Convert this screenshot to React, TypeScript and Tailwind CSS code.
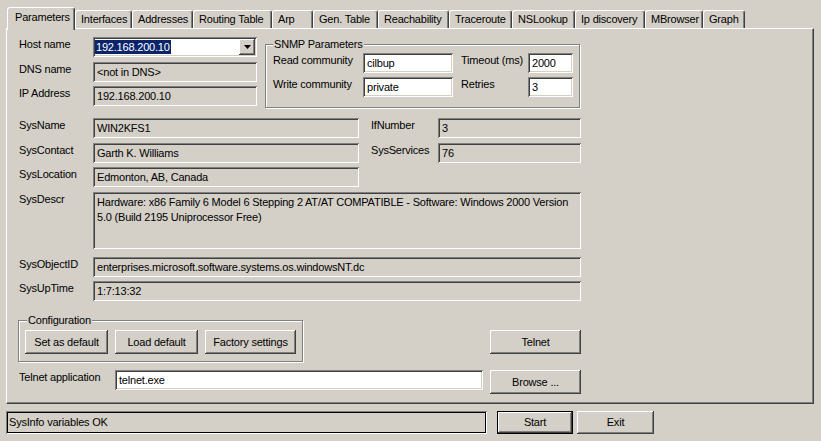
import type { ReactNode } from "react";

// win2000 style bevels
const sunken =
  "shadow-[inset_1px_1px_#808080,inset_-1px_-1px_#ffffff,inset_2px_2px_#404040,inset_-2px_-2px_#d4d0c8]";
const raised =
  "shadow-[inset_-1px_-1px_#404040,inset_1px_1px_#ffffff,inset_-2px_-2px_#808080,inset_2px_2px_#d4d0c8]";
const etched = "border border-[#808080] shadow-[inset_1px_1px_#ffffff,1px_1px_#ffffff]";

interface BoxProps {
  className?: string;
  white?: boolean;
  children?: ReactNode;
}

const Field = ({ className = "", white, children }: BoxProps) => (
  <div
    className={`${sunken} ${
      white ? "bg-white" : "bg-[#d4d0c8]"
    } h-[20px] flex items-center pl-[4px] leading-[13px] whitespace-nowrap overflow-hidden ${className}`}
  >
    {children}
  </div>
);

const Label = ({ className = "", children }: BoxProps) => (
  <div className={`pt-[1px] leading-[13px] whitespace-nowrap ${className}`}>{children}</div>
);

const Button = ({ className = "", children }: BoxProps) => (
  <div className={`${raised} bg-[#d4d0c8] flex items-center justify-center leading-[13px] ${className}`}>
    {children}
  </div>
);

const tabs = [
  { name: "Interfaces", w: "w-[57px]" },
  { name: "Addresses", w: "w-[61px]" },
  { name: "Routing Table", w: "w-[79px]" },
  { name: "Arp", w: "w-[41px]" },
  { name: "Gen. Table", w: "w-[65px]" },
  { name: "Reachability", w: "w-[71px]" },
  { name: "Traceroute", w: "w-[63px]" },
  { name: "NSLookup", w: "w-[63px]" },
  { name: "Ip discovery", w: "w-[70px]" },
  { name: "MBrowser", w: "w-[58px]" },
  { name: "Graph", w: "w-[42px]" },
];

const App = () => {
  return (
    <div className="w-[821px] h-[441px] bg-[#d4d0c8] text-black text-[11px] tracking-[-0.2px] font-['Liberation_Sans',Arial,sans-serif] overflow-hidden">
      {/* tab strip */}
      <div className="h-[28px] flex items-end pl-[7px]">
        <div className="relative z-10 w-[68px] h-[23px] -mb-[2px] bg-[#d4d0c8] border-l border-t border-white border-r border-r-[#404040] shadow-[inset_-1px_0_#808080] rounded-t-[3px] pl-[7px] pt-[3px] leading-[13px]">
          Parameters
        </div>
        {tabs.map((tab) => (
          <div
            key={tab.name}
            className={`${tab.w} h-[18px] border-l border-t border-white border-r border-r-[#404040] shadow-[inset_-1px_0_#808080] rounded-t-[3px] pl-[5px] pt-[2px] leading-[13px] whitespace-nowrap overflow-hidden`}
          >
            {tab.name}
          </div>
        ))}
      </div>

      {/* page */}
      <div className="ml-[6px] w-[808px] h-[376px] border border-white border-r-[#404040] border-b-[#404040] shadow-[inset_-1px_-1px_#808080] pl-[12px] pt-[8px] flex flex-col">
        <div className="flex items-start">
          <div className="w-[238px] flex flex-col">
            <div className="flex items-start">
              <Label className="w-[74px]">Host name</Label>
              <Field white className="w-[164px] !pl-[2px] pr-[2px]">
                <span className="bg-[#0a246a] text-white px-[1px] h-[14px] leading-[14px]">192.168.200.10</span>
                <Button className="ml-auto w-[16px] h-[16px]">
                  <svg width="7" height="4" viewBox="0 0 7 4">
                    <polygon points="0,0 7,0 3.5,4" fill="#000" />
                  </svg>
                </Button>
              </Field>
            </div>
            <div className="flex items-start mt-[5px]">
              <Label className="w-[74px]">DNS name</Label>
              <Field className="w-[164px]">&lt;not in DNS&gt;</Field>
            </div>
            <div className="flex items-start mt-[4px]">
              <Label className="w-[74px]">IP Address</Label>
              <Field className="w-[164px]">192.168.200.10</Field>
            </div>
          </div>

          <div className={`relative ml-[8px] mt-[7px] w-[315px] ${etched} pl-[7px] pt-[8px] pb-[10px]`}>
            <div className="absolute left-[7px] -top-[7px] px-[1px] bg-[#d4d0c8] leading-[13px]">SNMP Parameters</div>
            <div className="flex items-start">
              <Label className="w-[90px]">Read community</Label>
              <Field white className="w-[90px]">cilbup</Field>
              <Label className="ml-[8px] w-[67px]">Timeout (ms)</Label>
              <Field white className="w-[45px]">2000</Field>
            </div>
            <div className="flex items-start mt-[4px]">
              <Label className="w-[90px]">Write community</Label>
              <Field white className="w-[90px]">private</Field>
              <Label className="ml-[8px] w-[67px]">Retries</Label>
              <Field white className="w-[45px]">3</Field>
            </div>
          </div>
        </div>

        <div className="flex items-start mt-[10px]">
          <Label className="w-[74px]">SysName</Label>
          <Field className="w-[266px]">WIN2KFS1</Field>
          <Label className="ml-[12px] w-[67px]">IfNumber</Label>
          <Field className="w-[143px]">3</Field>
        </div>
        <div className="flex items-start mt-[5px]">
          <Label className="w-[74px]">SysContact</Label>
          <Field className="w-[266px]">Garth K. Williams</Field>
          <Label className="ml-[12px] w-[67px]">SysServices</Label>
          <Field className="w-[143px]">76</Field>
        </div>
        <div className="flex items-start mt-[4px]">
          <Label className="w-[74px]">SysLocation</Label>
          <Field className="w-[266px]">Edmonton, AB, Canada</Field>
        </div>
        <div className="flex items-start mt-[5px]">
          <Label className="w-[74px]">SysDescr</Label>
          <div className={`${sunken} bg-[#d4d0c8] w-[488px] h-[57px] pl-[4px] pt-[3px] leading-[15px] whitespace-nowrap overflow-hidden`}>
            Hardware: x86 Family 6 Model 6 Stepping 2 AT/AT COMPATIBLE - Software: Windows 2000 Version
            <br />
            5.0 (Build 2195 Uniprocessor Free)
          </div>
        </div>
        <div className="flex items-start mt-[8px]">
          <Label className="w-[74px]">SysObjectID</Label>
          <Field className="w-[488px]">enterprises.microsoft.software.systems.os.windowsNT.dc</Field>
        </div>
        <div className="flex items-start mt-[4px]">
          <Label className="w-[74px]">SysUpTime</Label>
          <Field className="w-[488px]">1:7:13:32</Field>
        </div>

        <div className="flex items-start mt-[19px]">
          <div className={`relative -ml-[1px] w-[285px] ${etched} flex gap-[7px] pl-[6px] pt-[9px] pb-[7px]`}>
            <div className="absolute left-[8px] -top-[7px] px-[1px] bg-[#d4d0c8] leading-[13px]">Configuration</div>
            <Button className="w-[83px] h-[24px]">Set as default</Button>
            <Button className="w-[83px] h-[24px]">Load default</Button>
            <Button className="w-[91px] h-[24px]">Factory settings</Button>
          </div>
          <Button className="ml-[187px] mt-[10px] w-[91px] h-[24px]">Telnet</Button>
        </div>

        <div className="flex items-start mt-[8px]">
          <Label className="w-[96px]">Telnet application</Label>
          <Field white className="w-[368px]">telnet.exe</Field>
          <Button className="ml-[7px] w-[91px] h-[24px]">Browse ...</Button>
        </div>
      </div>

      {/* status row */}
      <div className="flex items-start ml-[6px] mt-[7px]">
        <div className="w-[481px] h-[23px] shadow-[inset_1px_1px_#808080,inset_-1px_-1px_#ffffff,inset_2px_2px_#000000,inset_-2px_-2px_#000000] flex items-center pl-[3px] leading-[13px]">
          SysInfo variables OK
        </div>
        <div className="ml-[10px] w-[76px] h-[23px] border border-black">
          <Button className="w-full h-full">Start</Button>
        </div>
        <Button className="ml-[4px] w-[77px] h-[23px]">Exit</Button>
      </div>
    </div>
  );
};

export default App;
